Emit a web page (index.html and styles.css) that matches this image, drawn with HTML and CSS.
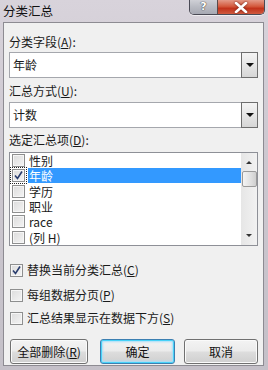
FILE: index.html
```html
<!DOCTYPE html>
<html lang="zh-CN">
<head>
  <meta charset="UTF-8" />
  <title>分类汇总</title>
  <link rel="stylesheet" href="styles.css">
</head>
<body>
  <div class="window">
    <!-- Barre de titre -->
    <div class="titlebar">
      <span class="title">分类汇总</span>
      <div class="caption-buttons">
        <div class="cap-help">?</div>
        <div class="cap-close">
          <svg width="14" height="11" viewBox="0 0 14 11"><path d="M2 1 L12 10 M12 1 L2 10" stroke="#fff" stroke-width="2.6" stroke-linecap="round"/></svg>
        </div>
      </div>
    </div>

    <div class="client">
      <div class="label label-first">分类字段(<u>A</u>):</div>
      <div class="combo">
        <div class="combo-field">年龄</div>
        <div class="combo-btn"><span class="tri"></span></div>
      </div>

      <div class="label label-gap">汇总方式(<u>U</u>):</div>
      <div class="combo combo-second">
        <div class="combo-field">计数</div>
        <div class="combo-btn"><span class="tri"></span></div>
      </div>

      <div class="label label-list">选定汇总项(<u>D</u>):</div>
      <div class="listbox">
        <div class="list-items">
          <div class="item"><span class="cb"></span><span class="item-text">性别</span></div>
          <div class="item"><span class="cb cb-focus">
            <svg width="11" height="11" viewBox="0 0 11 11"><path d="M2 5.5 L4.5 8.5 L9 1.5" fill="none" stroke="#2a3d6e" stroke-width="1.6"/></svg>
          </span><span class="item-text selected">年龄</span></div>
          <div class="item"><span class="cb"></span><span class="item-text">学历</span></div>
          <div class="item"><span class="cb"></span><span class="item-text">职业</span></div>
          <div class="item"><span class="cb"></span><span class="item-text">race</span></div>
          <div class="item"><span class="cb"></span><span class="item-text">(列 H)</span></div>
        </div>
        <div class="scrollbar">
          <span class="arrow-up"></span>
          <span class="thumb"></span>
          <span class="track"></span>
          <span class="arrow-down"></span>
        </div>
      </div>

      <div class="option option-first"><span class="cb cb-checked">
        <svg width="11" height="11" viewBox="0 0 11 11"><path d="M2 5.5 L4.5 8.5 L9 1.5" fill="none" stroke="#2a3d6e" stroke-width="1.6"/></svg>
      </span>替换当前分类汇总(<u>C</u>)</div>
      <div class="option option-second"><span class="cb"></span>每组数据分页(<u>P</u>)</div>
      <div class="option option-third"><span class="cb"></span>汇总结果显示在数据下方(<u>S</u>)</div>

      <div class="buttons">
        <button class="btn btn-delete">全部删除(<u>R</u>)</button>
        <button class="btn btn-ok">确定</button>
        <button class="btn btn-cancel">取消</button>
      </div>
    </div>
  </div>
</body>
</html>
```

FILE: styles.css
```css
/* Fenêtre complète */
html, body {
  height: 100%;
  margin: 0;
  padding: 0;
  font-family: "Noto Sans CJK SC", "Liberation Sans", sans-serif;
  font-size: 12px;
  color: #1a1a1a;
  background: #c9c5cd;
}

.window {
  width: 268px;
  height: 370px;
  display: flex;
  flex-direction: column;
  background: linear-gradient(180deg, #d8d3db 0%, #cdc8d0 40%, #c4c0c8 100%);
}

.titlebar {
  height: 22px;
  display: flex;
  align-items: flex-start;
}
.title {
  margin-left: 3px;
  margin-top: 2px;
  font-size: 12.5px;
  line-height: 17px;
  color: #111;
}
.caption-buttons {
  margin-left: auto;
  margin-right: 3px;
  display: flex;
  height: 14px;
  border: 1px solid #4a4a55;
  border-top: none;
  border-radius: 0 0 5px 5px;
  overflow: hidden;
  box-shadow: 0 1px 0 rgba(255,255,255,0.6);
}
.cap-help {
  width: 27px;
  background: linear-gradient(180deg, #cfd0d6 0%, #b8bac2 50%, #a7a9b3 100%);
  border-right: 1px solid #5a4a4a;
  color: #fff;
  font-weight: bold;
  font-family: "DejaVu Sans", sans-serif;
  font-size: 11px;
  line-height: 13px;
  text-align: center;
  text-shadow: 0 0 1px #333, 0 0 1px #333;
}
.cap-close {
  width: 46px;
  display: flex;
  align-items: center;
  justify-content: center;
  background: linear-gradient(180deg, #e49a88 0%, #d45a3e 45%, #c2331b 60%, #cf5a40 100%);
}
.cap-close svg {
  filter: drop-shadow(0 0 1px #6a1a10);
}

/* Zone cliente */
.client {
  flex: 1;
  margin: 0 4px 4px 3px;
  border: 1px solid #8d8b92;
  background: #f0f0f0;
  padding: 0 5px;
  display: flex;
  flex-direction: column;
}

.label {
  line-height: 16px;
  height: 16px;
}
.label-first { margin-top: 11px; }
.label-gap { margin-top: 5px; }
.label-list { margin-top: 4px; }

.combo {
  margin-top: 2px;
  height: 24px;
  display: flex;
  background: #fff;
  border: 1px solid #a5a7ad;
  border-right: none;
}
.combo-second { margin-top: 3px; }
.combo-field {
  flex: 1;
  padding-left: 3px;
  line-height: 23px;
}
.combo-btn {
  width: 15px;
  margin: -1px 0;
  border: 1px solid #6e6e6e;
  background: linear-gradient(180deg, #f4f4f4 0%, #e6e6e6 50%, #d6d6d6 100%);
  display: flex;
  align-items: center;
  justify-content: center;
}
.tri {
  width: 0;
  height: 0;
  border-left: 4px solid transparent;
  border-right: 4px solid transparent;
  border-top: 4px solid #111;
}

/* Liste */
.listbox {
  margin-top: 4px;
  height: 92px;
  border: 1px solid #8e9097;
  background: #fff;
  display: flex;
}
.list-items {
  flex: 1;
  display: flex;
  flex-direction: column;
}
.item {
  height: 15.4px;
  display: flex;
  align-items: center;
  padding-left: 2px;
}
.item-text {
  flex: 1;
  margin-left: 3px;
  padding-left: 1px;
  line-height: 15px;
  height: 15px;
}
.item-text.selected {
  background: #3399ff;
  color: #fff;
}

.cb {
  width: 11px;
  height: 11px;
  border: 1px solid #8e8f8f;
  background: linear-gradient(135deg, #dcdcdc 0%, #f4f4f4 100%);
  box-shadow: inset 0 0 0 1px #f6f6f6;
  display: flex;
  align-items: center;
  justify-content: center;
  flex-shrink: 0;
}
.cb svg { display: block; }
.cb-focus {
  outline: 1px dotted #222;
  outline-offset: 1px;
}

.scrollbar {
  width: 16px;
  background: linear-gradient(90deg, #e6e6e6, #f2f2f2);
  display: flex;
  flex-direction: column;
  align-items: center;
}
.arrow-up, .arrow-down {
  width: 0;
  height: 0;
  border-left: 3px solid transparent;
  border-right: 3px solid transparent;
}
.arrow-up {
  margin-top: 8px;
  border-bottom: 3px solid #333;
}
.arrow-down {
  margin-bottom: 8px;
  border-top: 3px solid #333;
}
.thumb {
  margin-top: 7px;
  width: 13px;
  height: 14px;
  border: 1px solid #9a9a9a;
  border-radius: 2px;
  background: linear-gradient(90deg, #f4f4f4 0%, #e0e0e0 60%, #cfcfcf 100%);
}
.track { flex: 1; }

/* Options */
.option {
  display: flex;
  align-items: center;
  height: 16px;
  line-height: 16px;
  padding-left: 1px;
}
.option .cb { margin-right: 4px; }
.option-first { margin-top: 16px; }
.option-second { margin-top: 9px; }
.option-third { margin-top: 7px; }

/* Boutons */
.buttons {
  margin-top: 13px;
  display: flex;
  padding-left: 1px;
}
.btn {
  height: 25px;
  padding: 0;
  font-family: inherit;
  font-size: 12px;
  color: #111;
  border: 1px solid #707070;
  border-radius: 3px;
  background: linear-gradient(180deg, #f3f3f3 0%, #ebebeb 48%, #dddddd 52%, #cfcfcf 100%);
  box-shadow: inset 0 0 0 1px #fafafa;
}
.btn-delete { width: 78px; }
.btn-ok {
  width: 75px;
  margin-left: 12px;
  border-color: #3c7fb1;
  background: linear-gradient(180deg, #f2f2f2 0%, #ebebeb 48%, #dddddd 52%, #cfcfcf 100%);
  box-shadow: inset 0 0 0 1px #48d2f8, inset 0 0 2px 2px #a8def8;
}
.btn-cancel {
  width: 74px;
  margin-left: 9px;
}
```
